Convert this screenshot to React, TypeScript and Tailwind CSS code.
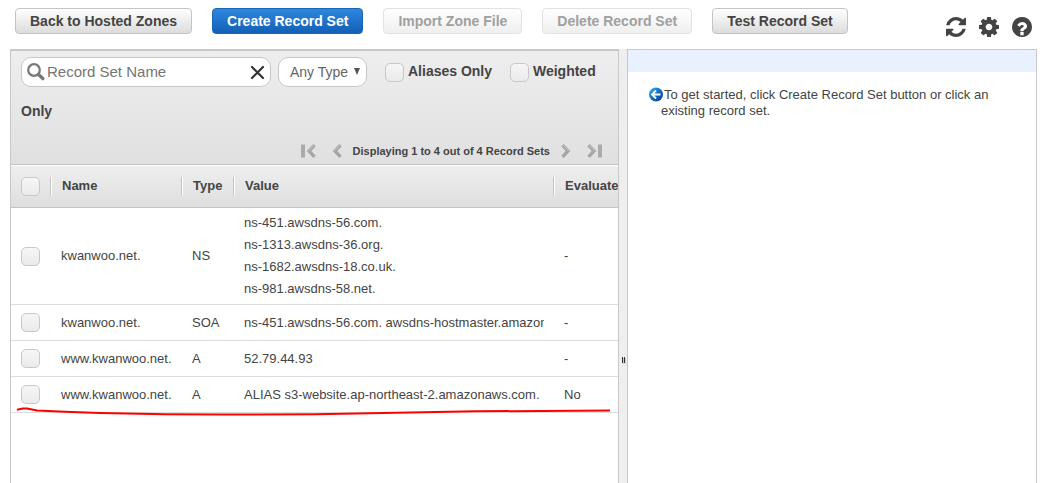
import React from "react";

const REFRESH =
  "M1511 928q0 5-1 7-64 268-268 434.5t-478 166.5q-146 0-282.5-55t-243.5-157l-129 129q-19 19-45 19t-45-19-19-45v-448q0-26 19-45t45-19h448q26 0 45 19t19 45-19 45l-137 137q71 66 161 102t187 36q134 0 250-65t186-179q11-17 53-117 8-23 30-23h192q13 0 22.5 9.5t9.5 22.5zm25-800v448q0 26-19 45t-45 19h-448q-26 0-45-19t-19-45 19-45l138-138q-148-137-349-137-134 0-250 65t-186 179q-11 17-53 117-8 23-30 23h-199q-13 0-22.5-9.5t-9.5-22.5v-7q65-268 270-434.5t480-166.5q146 0 284 55.5t245 156.5l130-129q19-19 45-19t45 19 19 45z";
const COG =
  "M1024 768q0-106-75-181t-181-75-181 75-75 181 75 181 181 75 181-75 75-181zm512-109v222q0 12-8 23t-20 13l-185 28q-19 54-39 91 35 50 107 138 10 12 10 25t-9 23q-27 37-99 108t-94 71q-12 0-26-9l-138-108q-44 23-91 38-16 136-29 186-7 28-36 28h-222q-14 0-24.5-8.5t-11.5-21.5l-28-184q-49-16-90-37l-141 107q-10 9-25 9-14 0-25-11-126-114-165-168-7-10-7-23 0-12 8-23 15-21 51-66.5t54-70.5q-27-50-41-99l-183-27q-13-2-21-12.5t-8-23.5v-222q0-12 8-23t19-13l186-28q14-46 39-92-40-57-107-138-10-12-10-24 0-10 9-23 26-36 98.5-107.5t94.5-71.5q13 0 26 10l138 107q44-23 91-38 16-136 29-186 7-28 36-28h222q14 0 24.5 8.5t11.5 21.5l28 184q49 16 90 37l142-107q9-9 24-9 13 0 25 10 129 119 165 170 7 8 7 22 0 12-8 23-15 21-51 66.5t-54 70.5q26 50 41 98l183 28q13 2 21 12.5t8 23.5z";
const HELP =
  "M896 1376v-192q0-14-9-23t-23-9h-192q-14 0-23 9t-9 23v192q0 14 9 23t23 9h192q14 0 23-9t9-23zm256-672q0-88-55.5-163t-138.5-116-170-41q-243 0-371 213-15 24 8 42l132 100q7 6 19 6 16 0 25-12 53-68 86-92 34-24 86-24 48 0 85.5 26t37.5 59q0 38-20 61t-68 45q-63 28-115.5 86.5t-52.5 125.5v36q0 14 9 23t23 9h192q14 0 23-9t9-23q0-19 21.5-49.5t54.5-49.5q32-18 49-28.5t46-35 44.5-48 28-60.5 12.5-81zm384 64q0 209-103 385.5t-279.5 279.5-385.5 103-385.5-103-279.5-279.5-103-385.5 103-385.5 279.5-279.5 385.5-103 385.5 103 279.5 279.5 103 385.5z";

function IconButton({ label, path }: { label: string; path: string }) {
  return (
    <button type="button" aria-label={label} className="block text-[#444]">
      <svg viewBox="0 0 1536 1536" className="block size-5" fill="currentColor">
        <path d={path} />
      </svg>
    </button>
  );
}

const buttonBase = "h-[26px] rounded-[4px] border px-[14px] text-[14px] leading-[24px] font-bold whitespace-nowrap";
const buttonStyles = {
  normal: "border-[#c4c4c4] bg-linear-to-b from-white to-[#dcdcdc] text-[#444]",
  primary: "border-[#1a66b8] bg-linear-to-b from-[#2f86de] to-[#1160b6] text-white",
  disabled: "border-[#e2e2e2] bg-linear-to-b from-white to-[#efefef] text-[#a0a0a0]",
};

function ActionButton({ kind, children }: { kind: keyof typeof buttonStyles; children: React.ReactNode }) {
  return (
    <button type="button" disabled={kind === "disabled"} className={`${buttonBase} ${buttonStyles[kind]}`}>
      {children}
    </button>
  );
}

function Check({ id, label, display = "inline-block" }: { id: string; label?: string; display?: "block" | "inline-block" }) {
  return (
    <input
      id={id}
      type="checkbox"
      aria-label={label}
      className={`${display} size-[19px] appearance-none rounded-[5px] border border-[#c8c8c8] bg-linear-to-b from-[#f6f6f6] to-[#eaeaea] align-middle`}
    />
  );
}

function Pager({ label, flip, bar }: { label: string; flip?: boolean; bar?: boolean }) {
  const art = (
    <>
      {bar && <path d="M0 0.5h4v13H0z" fill="#aaa" />}
      <path
        d={bar ? "M13.5 1.2 8 7l5.5 5.8" : "M8.5 1.2 3 7l5.5 5.8"}
        fill="none"
        stroke="#a6a6a6"
        strokeWidth="3.4"
      />
      <path d={bar ? "M13 1.2 7.2 7" : "M8 1.2 2.2 7"} fill="none" stroke="#c6c6c6" strokeWidth="1" />
    </>
  );
  const w = bar ? 15 : 10;
  return (
    <button type="button" aria-label={label} className="block">
      <svg width={w} height="14" viewBox={`0 0 ${w} 14`} className="block">
        {flip ? <g transform={`translate(${w} 0) scale(-1 1)`}>{art}</g> : art}
      </svg>
    </button>
  );
}

const records = [
  {
    name: "kwanwoo.net.",
    type: "NS",
    values: ["ns-451.awsdns-56.com.", "ns-1313.awsdns-36.org.", "ns-1682.awsdns-18.co.uk.", "ns-981.awsdns-58.net."],
    evaluate: "-",
  },
  { name: "kwanwoo.net.", type: "SOA", values: ["ns-451.awsdns-56.com. awsdns-hostmaster.amazon"], evaluate: "-" },
  { name: "www.kwanwoo.net.", type: "A", values: ["52.79.44.93"], evaluate: "-" },
  {
    name: "www.kwanwoo.net.",
    type: "A",
    values: ["ALIAS s3-website.ap-northeast-2.amazonaws.com."],
    evaluate: "No",
  },
];

function HeadCell({ children }: { children: React.ReactNode }) {
  return (
    <th scope="col" className="p-0 text-left font-bold">
      <div className="flex h-[19px] border-l border-[#c4c4c4]">
        <span className="h-full border-l border-white pl-[10px] leading-[17px]">{children}</span>
      </div>
    </th>
  );
}

function RecordTable() {
  return (
    <div className="overflow-hidden">
      <table className="w-full table-fixed border-separate border-spacing-0 text-[13px] leading-[22px]">
        <colgroup>
          <col className="w-[39px]" />
          <col className="w-[131px]" />
          <col className="w-[52px]" />
          <col className="w-[320px]" />
          <col />
        </colgroup>
        <thead>
          <tr className="h-[43px] bg-linear-to-b from-[#efefef] to-[#dedede] shadow-[inset_0_1px_0_#fff,inset_0_-1px_0_#c4c4c4]">
            <th scope="col" className="p-0 pl-[10px] text-left">
              <Check id="all" label="Select all record sets" display="block" />
            </th>
            <HeadCell>Name</HeadCell>
            <HeadCell>Type</HeadCell>
            <HeadCell>Value</HeadCell>
            <HeadCell>Evaluate</HeadCell>
          </tr>
        </thead>
        <tbody>
          {records.map((r, i) => (
            <tr key={i} className="h-9 whitespace-nowrap">
              <td className="border-b border-[#dcdcdc] p-0 pl-[10px]">
                <Check id={`record-${i}`} label={`Select ${r.name} ${r.type}`} display="block" />
              </td>
              <td className="border-b border-[#dcdcdc] p-0 pl-[11px]">{r.name}</td>
              <td className="border-b border-[#dcdcdc] p-0 pl-[11px]">{r.type}</td>
              <td className="border-b border-[#dcdcdc] py-1 pr-[9px] pl-[11px]">
                <div className="overflow-hidden">
                  {r.values.map((v) => (
                    <div key={v}>{v}</div>
                  ))}
                </div>
              </td>
              <td className="border-b border-[#dcdcdc] p-0 pl-[11px]">{r.evaluate}</td>
            </tr>
          ))}
        </tbody>
      </table>
    </div>
  );
}

function Toolbar() {
  return (
    <div className="border-b border-[#c4c4c4] bg-linear-to-b from-[#eee] to-[#e0e0e0] px-[10px]">
      <div className="text-[14px] leading-[40px] font-bold">
        <span className="mr-[7px] inline-flex h-[30px] w-[250px] items-center rounded-[10px] border border-[#c8c8c8] bg-white pr-[5px] pl-[5px] align-middle font-normal">
          <svg width="18" height="18" viewBox="0 0 18 18" fill="none" stroke="#777" className="shrink-0">
            <circle cx="7" cy="7" r="5.8" strokeWidth="2.2" />
            <path d="M11.5 11.5 15.800 15.600" strokeWidth="3.4" strokeLinecap="round" />
          </svg>
          <input
            type="text"
            aria-label="Record Set Name"
            placeholder="Record Set Name"
            className="h-7 min-w-0 flex-1 pl-[2px] text-[15px] outline-none placeholder:text-[#757575]"
          />
          <button type="button" aria-label="Clear" className="block">
            <svg width="15" height="15" viewBox="0 0 15 15" className="block" stroke="#333" strokeWidth="2.2" strokeLinecap="round">
              <path d="M2 2l11 11M13 2 2 13" />
            </svg>
          </button>
        </span>
        <span className="relative mr-[18px] inline-flex align-middle leading-[28px] font-normal">
          <select
            aria-label="Record type"
            className="h-[30px] w-[89px] appearance-none rounded-[10px] border border-[#c8c8c8] bg-white pl-[11px] text-[14px] leading-[28px] text-[#666]"
          >
            <option>Any Type</option>
          </select>
          <svg width="6" height="7" viewBox="0 0 6 7" className="pointer-events-none absolute top-[11px] right-[7px]">
            <path d="M0 0h6L3 7z" fill="#555" />
          </svg>
        </span>
        <Check id="aliases" />
        <label htmlFor="aliases" className="mr-[14px] pl-[4px]">
          Aliases Only
        </label>{" "}
        <Check id="weighted" />
        <label htmlFor="weighted" className="pl-[4px]">
          Weighted Only
        </label>
      </div>
      <div className="flex items-center justify-end pt-3 pr-[6px] pb-[5px] text-[11px] leading-[16px] font-bold whitespace-nowrap">
        <div className="flex items-center gap-4">
          <Pager label="First page" bar />
          <Pager label="Previous page" />
        </div>
        <span className="px-[11px]">Displaying 1 to 4 out of 4 Record Sets</span>
        <div className="flex items-center gap-4">
          <Pager label="Next page" flip />
          <Pager label="Last page" flip bar />
        </div>
      </div>
    </div>
  );
}

export default function App() {
  return (
    <div className="relative flex min-h-screen flex-col bg-white font-['Liberation_Sans',Arial,sans-serif] text-[13px] text-[#444]">
      <header className="flex items-start justify-between pt-2 pr-4 pb-3 pl-[15px]">
        <div className="flex gap-5">
          <ActionButton kind="normal">Back to Hosted Zones</ActionButton>
          <ActionButton kind="primary">Create Record Set</ActionButton>
          <ActionButton kind="disabled">Import Zone File</ActionButton>
          <ActionButton kind="disabled">Delete Record Set</ActionButton>
          <ActionButton kind="normal">Test Record Set</ActionButton>
        </div>
        <div className="flex gap-[13px] pt-[9px]">
          <IconButton label="Refresh" path={REFRESH} />
          <IconButton label="Preferences" path={COG} />
          <IconButton label="Help" path={HELP} />
        </div>
      </header>
      <main className="mr-[11px] ml-[10px] grid flex-1 grid-cols-[minmax(0,609fr)_8px_minmax(0,410fr)]">
        <section className="border-x border-t-2 border-[#c8c8c8]">
          <Toolbar />
          <RecordTable />
        </section>
        <div className="flex items-center justify-end bg-[#eee] pt-[188px] pr-px">
          <svg width="4" height="7" viewBox="0 0 4 7">
            <path d="M0.5 0v6M2.5 0v6" stroke="#333" />
            <path d="M1.5 1v6M3.5 1v6" stroke="#ccc" />
          </svg>
        </div>
        <aside className="border-x border-t border-[#c8c8c8]">
          <div className="h-[22px] bg-[#e9f1fe]" />
          <p className="pt-[15px] pr-5 pl-[33px] -indent-3 leading-[16px]">
            <svg width="15" height="15" viewBox="0 0 15 15" className="inline-block align-[-3px]">
              <defs>
                <linearGradient id="ball" x1="0" y1="0" x2="1" y2="1">
                  <stop offset="0" stopColor="#3cb4f0" />
                  <stop offset="0.5" stopColor="#0f6fc4" />
                  <stop offset="1" stopColor="#06378c" />
                </linearGradient>
              </defs>
              <circle cx="7" cy="7.5" r="7" fill="url(#ball)" />
              <path d="M7 3.5 3 7.5l4 4M3.5 7.5h8" fill="none" stroke="#fff" strokeWidth="1.8" />
            </svg>
            To get started, click Create Record Set button or click an existing record set.
          </p>
        </aside>
      </main>
      <svg width="600" height="12" viewBox="0 0 600 12" className="pointer-events-none absolute top-[406px] left-[15px]">
        <path
          d="M2 3.7 8 2.4 12 2.4 22 4.6 50 5.8 85 7 150 8.3 210 8.6 300 8.2 395 6.4 460 5.3 595 4.6"
          fill="none"
          stroke="#f00"
          strokeWidth="2"
          strokeLinejoin="round"
        />
      </svg>
    </div>
  );
}
